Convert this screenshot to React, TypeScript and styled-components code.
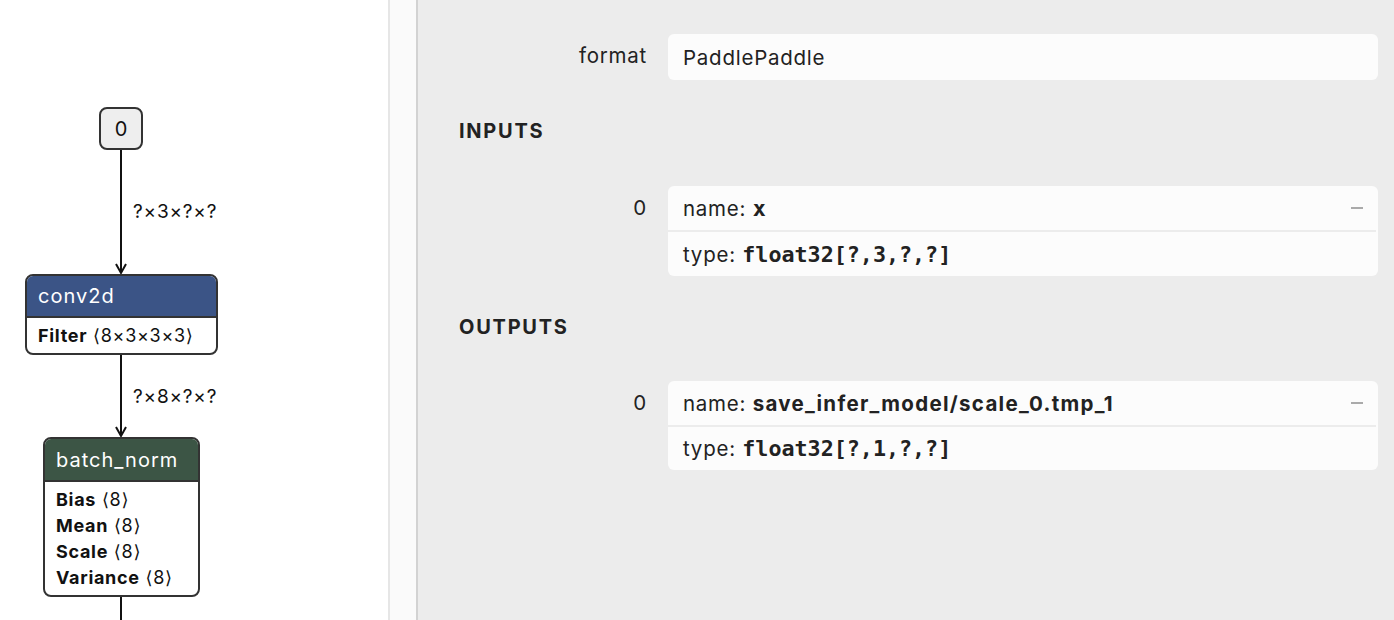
import React from "react";
import styled, { createGlobalStyle } from "styled-components";

const Global = createGlobalStyle`
  html, body { margin: 0; padding: 0; }
  body { font-family: Inter, "Noto Sans", "DejaVu Sans", sans-serif; color: #222; }
  * { box-sizing: border-box; }
`;

const Page = styled.div`
  display: flex;
  width: 1394px;
  height: 620px;
  overflow: hidden;
`;

const GraphPane = styled.div`
  position: relative;
  width: 388px;
  flex: none;
  background: #fff;
  overflow: hidden;
`;

const Gutter = styled.div`
  width: 30px;
  flex: none;
  background: #fafafa;
  border-left: 2px solid #e6e6e6;
  border-right: 2px solid #d2d2d2;
`;

const Sidebar = styled.div`
  flex: 1;
  background: #ececec;
  padding: 34px 16px 0 41px;
  display: flex;
  flex-direction: column;
`;

const PropRow = styled.div`
  display: grid;
  grid-template-columns: 188px 710px;
  column-gap: 21px;
  align-items: start;
`;

const PropLabel = styled.div<{ $h: number }>`
  text-align: right;
  font-size: 20.5px;
  letter-spacing: 0.75px;
  line-height: ${(p) => p.$h}px;
  color: #222;
`;

const ValueBox = styled.div`
  background: #fcfcfc;
  border-radius: 6px;
  height: 46px;
  display: flex;
  align-items: center;
  padding: 0 15px;
  font-size: 20.5px;
  letter-spacing: 0.75px;
  color: #222;
`;

const Heading = styled.div<{ $mb: number }>`
  font-size: 20px;
  font-weight: 700;
  letter-spacing: 1.75px;
  line-height: 24px;
  margin-top: 39px;
  margin-bottom: ${(p) => p.$mb}px;
  color: #222;
`;

const Card = styled.div`
  background: #fcfcfc;
  border-radius: 6px;
  display: flex;
  flex-direction: column;
`;

const CardLine = styled.div<{ $sep?: boolean; $h: number }>`
  height: ${(p) => p.$h}px;
  display: flex;
  align-items: center;
  justify-content: space-between;
  padding: 0 15px;
  font-size: 20.5px;
  letter-spacing: 0.75px;
  color: #222;
  border-top: ${(p) => (p.$sep ? "2px solid #ececec" : "none")};
  margin-right: ${(p) => (p.$sep ? "2px" : "0")};
`;

const Bold = styled.b`
  font-weight: 700;
  letter-spacing: 1.3px;
`;

const Mono = styled.b`
  font-family: "DejaVu Sans Mono", "Liberation Mono", monospace;
  font-weight: 700;
  font-size: 21.7px;
  letter-spacing: 0;
`;

const Minus = styled.span`
  display: block;
  width: 12px;
  height: 2px;
  background: #aaa;
`;

/* graph */
const EdgeLayer = styled.svg`
  position: absolute;
  left: 0;
  top: 0;
`;

const InputNode = styled.div<{ $x: number; $y: number }>`
  position: absolute;
  left: ${(p) => p.$x}px;
  top: ${(p) => p.$y}px;
  width: 44px;
  height: 43px;
  border: 2px solid #333;
  border-radius: 8px;
  background: #eee;
  display: flex;
  align-items: center;
  justify-content: center;
  font-size: 20px;
  color: #111;
`;

const OpNode = styled.div<{ $x: number; $y: number; $w: number }>`
  position: absolute;
  left: ${(p) => p.$x}px;
  top: ${(p) => p.$y}px;
  width: ${(p) => p.$w}px;
  border: 2px solid #333;
  border-radius: 8px;
  background: #fff;
  overflow: hidden;
`;

const OpHeader = styled.div<{ $bg: string; $h: number }>`
  background: ${(p) => p.$bg};
  height: ${(p) => p.$h}px;
  border-bottom: 2px solid #333;
  color: #fff;
  font-size: 20px;
  letter-spacing: 1px;
  display: flex;
  align-items: center;
  padding-left: 11px;
`;

const OpBody = styled.div`
  padding: 5px 11px 4px;
  font-size: 18px;
  letter-spacing: 0.7px;
  color: #111;
`;

const Attr = styled.div`
  line-height: 26px;
  white-space: nowrap;
`;

const AttrName = styled.b`
  font-weight: 700;
`;

const EdgeLabel = styled.div<{ $x: number; $y: number }>`
  position: absolute;
  left: ${(p) => p.$x}px;
  top: ${(p) => p.$y}px;
  font-size: 19px;
  letter-spacing: 0.8px;
  line-height: 22px;
  color: #111;
`;

const Arrow = ({ x, y1, y2, head }: { x: number; y1: number; y2: number; head: boolean }) => (
  <g>
    <line x1={x} y1={y1} x2={x} y2={head ? y2 - 2 : y2} stroke="#111" strokeWidth={2} />
    {head && (
      <path
        d={`M${x - 5} ${y2 - 9} L${x} ${y2} L${x + 5} ${y2 - 9}`}
        fill="none"
        stroke="#111"
        strokeWidth={2}
      />
    )}
  </g>
);

export default function App() {
  return (
    <Page>
      <Global />
      <GraphPane>
        <EdgeLayer width={388} height={620}>
          <Arrow x={121} y1={150} y2={273} head />
          <Arrow x={121} y1={354} y2={436} head />
          <Arrow x={121} y1={596} y2={620} head={false} />
        </EdgeLayer>
        <InputNode $x={99} $y={107}>0</InputNode>
        <EdgeLabel $x={133} $y={201}>?×3×?×?</EdgeLabel>
        <OpNode $x={25} $y={274} $w={193}>
          <OpHeader $bg="#3b5486" $h={42}>conv2d</OpHeader>
          <OpBody>
            <Attr>
              <AttrName>Filter</AttrName> ⟨8×3×3×3⟩
            </Attr>
          </OpBody>
        </OpNode>
        <EdgeLabel $x={133} $y={386}>?×8×?×?</EdgeLabel>
        <OpNode $x={43} $y={437} $w={157}>
          <OpHeader $bg="#3c5545" $h={43}>batch_norm</OpHeader>
          <OpBody>
            <Attr>
              <AttrName>Bias</AttrName> ⟨8⟩
            </Attr>
            <Attr>
              <AttrName>Mean</AttrName> ⟨8⟩
            </Attr>
            <Attr>
              <AttrName>Scale</AttrName> ⟨8⟩
            </Attr>
            <Attr>
              <AttrName>Variance</AttrName> ⟨8⟩
            </Attr>
          </OpBody>
        </OpNode>
      </GraphPane>
      <Gutter />
      <Sidebar>
        <PropRow>
          <PropLabel $h={44}>format</PropLabel>
          <ValueBox>PaddlePaddle</ValueBox>
        </PropRow>
        <Heading $mb={43}>INPUTS</Heading>
        <PropRow>
          <PropLabel $h={44}>0</PropLabel>
          <Card>
            <CardLine $h={44}>
              <span>
                name: <Mono>x</Mono>
              </span>
              <Minus />
            </CardLine>
            <CardLine $sep $h={46}>
              <span>
                type: <Mono>float32[?,3,?,?]</Mono>
              </span>
            </CardLine>
          </Card>
        </PropRow>
        <Heading $mb={42}>OUTPUTS</Heading>
        <PropRow>
          <PropLabel $h={44}>0</PropLabel>
          <Card>
            <CardLine $h={44}>
              <span>
                name: <Bold>save_infer_model/scale_0.tmp_1</Bold>
              </span>
              <Minus />
            </CardLine>
            <CardLine $sep $h={45}>
              <span>
                type: <Mono>float32[?,1,?,?]</Mono>
              </span>
            </CardLine>
          </Card>
        </PropRow>
      </Sidebar>
    </Page>
  );
}
